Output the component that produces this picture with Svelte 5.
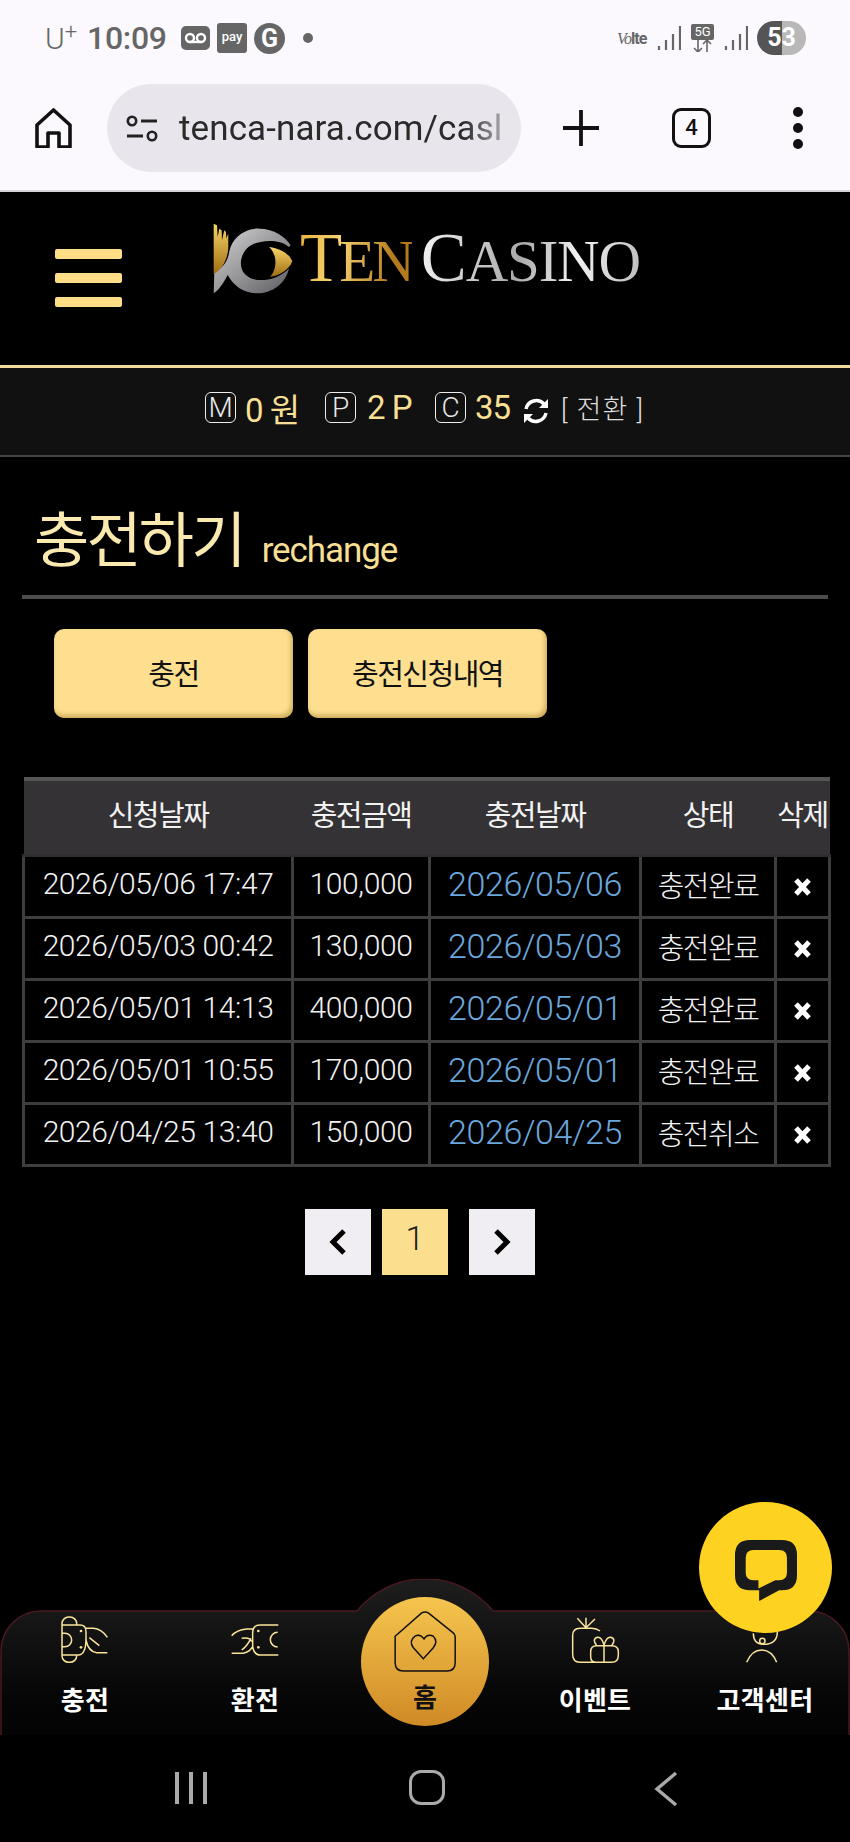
<script>
    const rows = [
        { req: "2026/05/06 17:47", amount: "100,000", date: "2026/05/06", status: "충전완료" },
        { req: "2026/05/03 00:42", amount: "130,000", date: "2026/05/03", status: "충전완료" },
        { req: "2026/05/01 14:13", amount: "400,000", date: "2026/05/01", status: "충전완료" },
        { req: "2026/05/01 10:55", amount: "170,000", date: "2026/05/01", status: "충전완료" },
        { req: "2026/04/25 13:40", amount: "150,000", date: "2026/04/25", status: "충전취소" }
    ];
</script>

<div class="page">
    <!-- android status bar -->
    <div class="status">
        <div class="status-left">
            <span class="carrier">U<sup>+</sup></span>
            <span class="clock">10:09</span>
            <svg class="vm" viewBox="0 0 29 24">
                <rect width="29" height="24" rx="5" fill="#666" />
                <circle cx="9" cy="12" r="4" fill="none" stroke="#fff" stroke-width="2.4" />
                <circle cx="20" cy="12" r="4" fill="none" stroke="#fff" stroke-width="2.4" />
                <path d="M9 16h11" stroke="#fff" stroke-width="2.4" />
            </svg>
            <span class="pay">pay</span>
            <span class="g">G</span>
            <span class="dot"></span>
        </div>
        <div class="status-right">
            <span class="volte"><i>Vo</i><b>lte</b></span>
            <svg class="sig" viewBox="0 0 24 24">
                <path d="M2 24v-4M9 24v-10M16 24v-16M23 24v-24" stroke="#666" stroke-width="2.2" />
            </svg>
            <span class="fiveg"><span>5G</span>
                <svg viewBox="0 0 23 12" width="23" height="12">
                    <path d="M7 0v12M3 8l4 4 4-4M16 12V0M12 4l4-4 4 4" fill="none" stroke="#666" stroke-width="1.6" />
                </svg>
            </span>
            <svg class="sig" viewBox="0 0 24 24">
                <path d="M2 24v-4M9 24v-10M16 24v-16M23 24v-24" stroke="#666" stroke-width="2.2" />
            </svg>
            <span class="battery">53</span>
        </div>
    </div>

    <!-- chrome toolbar -->
    <div class="toolbar">
        <svg class="tb-home" viewBox="0 0 37 40">
            <path d="M2 39V17L18.5 2 35 17v22H24V25H13v14Z" fill="none" stroke="#111" stroke-width="3.6" stroke-linejoin="round" />
        </svg>
        <div class="urlbar">
            <svg class="tune" viewBox="0 0 32 27">
                <circle cx="6" cy="6" r="4.2" fill="none" stroke="#222" stroke-width="2.6" />
                <path d="M15 6h16M1 21h16" stroke="#222" stroke-width="2.8" />
                <circle cx="26" cy="21" r="4.2" fill="none" stroke="#222" stroke-width="2.6" />
            </svg>
            <span class="url">tenca-nara.com/casl</span>
        </div>
        <svg class="tb-plus" viewBox="0 0 36 36">
            <path d="M18 0v36M0 18h36" stroke="#111" stroke-width="3.8" />
        </svg>
        <span class="tabs">4</span>
        <span class="kebab"><i></i><i></i><i></i></span>
    </div>

    <header class="head">
        <div class="burger"><i></i><i></i><i></i></div>
        <div class="logo">
            <svg class="mark" viewBox="60 30 250 220">
                <defs>
                    <linearGradient id="lg" x1="0" y1="0" x2="0" y2="1">
                        <stop offset="0" stop-color="#f8d568" />
                        <stop offset="1" stop-color="#a06c12" />
                    </linearGradient>
                    <linearGradient id="ls" x1="0" y1="0" x2="1" y2="1">
                        <stop offset="0" stop-color="#d6d6d8" />
                        <stop offset="1" stop-color="#5c5c60" />
                    </linearGradient>
                </defs>
                <path fill="url(#ls)" d="M115 120C125 70 170 48 205 50C250 50 285 75 300 100L295 105C270 85 235 85 210 90C170 95 150 125 150 155C150 185 175 205 210 205C240 205 270 195 295 170C285 215 245 245 200 245C160 245 130 225 110 190C100 210 85 235 68 245L70 180C95 170 110 150 115 120Z" />
                <path fill="url(#lg)" d="M235 105C270 110 295 125 305 148C295 175 265 192 238 195C258 175 262 130 235 105Z" />
                <path fill="url(#lg)" d="M68 35L78 40L80 75L85 50L92 55L93 85L100 55L105 60L106 80L112 65L112 110C108 150 90 175 68 187Z" />
            </svg>
            <span class="word gold"><span class="big">T</span>EN</span>
            <span class="word silver"><span class="big">C</span>ASINO</span>
        </div>
    </header>

    <div class="wallet">
        <span class="box">M</span><span class="val m">0 원</span>
        <span class="box">P</span><span class="val p">2 P</span>
        <span class="box">C</span><span class="val">35</span>
        <svg class="refresh" viewBox="0 0 28 28">
            <path d="M4 12A10.5 10.5 0 0 1 22 7" fill="none" stroke="#fff" stroke-width="3.4" />
            <path d="M26 2v9h-9Z" fill="#fff" />
            <path d="M24 16A10.5 10.5 0 0 1 6 21" fill="none" stroke="#fff" stroke-width="3.4" />
            <path d="M2 26v-9h9Z" fill="#fff" />
        </svg>
        <span class="swap">[ 전환 ]</span>
    </div>

    <main>
        <h1 class="title">충전하기 <small>rechange</small></h1>
        <div class="btns">
            <button>충전</button>
            <button>충전신청내역</button>
        </div>

        <table>
            <colgroup>
                <col style="width:269px" />
                <col style="width:137px" />
                <col style="width:211px" />
                <col style="width:135px" />
                <col style="width:54px" />
            </colgroup>
            <thead>
                <tr>
                    <th>신청날짜</th>
                    <th>충전금액</th>
                    <th>충전날짜</th>
                    <th>상태</th>
                    <th>삭제</th>
                </tr>
            </thead>
            <tbody>
                {#each rows as row}
                    <tr>
                        <td>{row.req}</td>
                        <td>{row.amount}</td>
                        <td class="blue">{row.date}</td>
                        <td class="kr">{row.status}</td>
                        <td>
                            <svg class="del" viewBox="0 0 19 20">
                                <path d="M3 3l13 14M16 3L3 17" stroke="#fff" stroke-width="5" />
                            </svg>
                        </td>
                    </tr>
                {/each}
            </tbody>
        </table>

        <div class="pager">
            <span class="pg">
                <svg viewBox="0 0 18 26"><path d="M15 2L4 13l11 11" fill="none" stroke="#000" stroke-width="5" /></svg>
            </span>
            <span class="pg on">1</span>
            <span class="pg next">
                <svg viewBox="0 0 18 26"><path d="M3 2l11 11L3 24" fill="none" stroke="#000" stroke-width="5" /></svg>
            </span>
        </div>
    </main>

    <nav class="tabbar">
        <svg class="tabshape" viewBox="0 0 850 156">
            <defs>
                <linearGradient id="tb" x1="0" y1="0" x2="0" y2="1">
                    <stop offset="0" stop-color="#1e1e1e" />
                    <stop offset="0.75" stop-color="#060606" />
                    <stop offset="1" stop-color="#030303" />
                </linearGradient>
            </defs>
            <path d="M1 156V72a40 40 0 0 1 40-40H357A88 88 0 0 1 493 32H809a40 40 0 0 1 40 40V156" fill="url(#tb)" stroke="#4a1a20" stroke-width="1.5" />
        </svg>

        <div class="tab">
            <svg class="ic" viewBox="30 30 150 150">
                <path d="M80 60V55A20 20 0 0 0 60 36H56A20 20 0 0 0 36 55V152A20 20 0 0 0 56 172H60A20 20 0 0 0 80 152V150M36 60H90Q108 60 108 80V100Q108 150 85 150H36M36 85H45A20 20 0 0 1 45 125H36M108 70H130Q155 72 172 97M172 143H140Q115 140 108 105M118 98L148 122" />
                <circle cx="93" cy="78" r="4" class="dotf" />
                <circle cx="93" cy="127" r="4" class="dotf" />
            </svg>
            <span>충전</span>
        </div>
        <div class="tab">
            <svg class="ic" viewBox="540 30 150 150">
                <path d="M685 60H630Q610 60 608 80V125Q612 150 630 150H685M683 82A22 22 0 1 0 683 126M545 92Q560 75 590 72H612M545 145H580Q600 140 608 125M575 100Q600 95 605 110M603 100Q590 125 575 135" />
                <circle cx="625" cy="78" r="4" class="dotf" />
                <circle cx="625" cy="127" r="4" class="dotf" />
            </svg>
            <span>환전</span>
        </div>
        <div class="tab">
            <div class="homebtn">
                <svg class="house" viewBox="60 15 210 205">
                    <path d="M75 100L155 30Q165 24 175 30L250 90Q256 95 256 102V180Q256 205 231 205H100Q75 205 75 180Z" />
                    <path d="M160 168L130 135Q115 115 135 100Q150 92 162 108Q172 92 190 100Q205 115 190 135Z" />
                </svg>
                <span>홈</span>
            </div>
        </div>
        <div class="tab">
            <svg class="ic" viewBox="30 30 150 150">
                <path d="M120 78Q110 70 95 70H60Q38 70 38 92V148Q38 172 60 172H155Q175 172 175 150V140Q175 122 155 122H110Q92 122 92 140V155Q92 172 110 172M132 122V172M132 120Q125 95 112 97Q95 102 110 122M132 120Q140 95 152 97Q170 102 155 122M78 68L52 40M78 68V38M78 68L105 42" />
            </svg>
            <span>이벤트</span>
        </div>
        <div class="tab">
            <svg class="ic" viewBox="550 30 150 150">
                <path d="M590 85Q590 118 620 118Q662 118 662 80M570 172Q585 135 615 135Q645 135 660 172" />
                <circle cx="617" cy="108" r="8" fill="none" stroke="#fbe39a" stroke-width="4.5" />
            </svg>
            <span>고객센터</span>
        </div>
    </nav>

    <div class="sysnav">
        <span class="recent"><i></i><i></i><i></i></span>
        <span class="homekey"></span>
        <svg class="back" viewBox="0 0 24 36">
            <path d="M22 2L3 18l19 16" fill="none" stroke="#aaa" stroke-width="3.4" />
        </svg>
    </div>

    <div class="chat">
        <svg viewBox="930 180 185 182">
            <path fill="#1a1a1a" fill-rule="evenodd" d="M975 180H1070Q1115 180 1115 225V285Q1115 330 1070 330H1062L1002 362V330H975Q930 330 930 285V225Q930 180 975 180ZM985 210Q962 210 962 233V278Q962 300 985 300H1000V325L1050 300H1062Q1085 300 1085 278V233Q1085 210 1062 210Z" />
        </svg>
    </div>
</div>

<style>
    :global(body) {
        background: #000;
    }

    .page {
        position: relative;
        display: flex;
        flex-direction: column;
        width: 850px;
        height: 1842px;
        overflow: hidden;
        background: #000;
        font-family: Roboto, "Noto Sans CJK KR", sans-serif;
    }

    /* status bar */
    .status {
        display: flex;
        justify-content: space-between;
        align-items: center;
        height: 76px;
        padding: 0 44px 0 45px;
        box-sizing: border-box;
        background: #fbf9fe;
        color: #666;
    }

    .status-left,
    .status-right {
        display: flex;
        align-items: center;
    }

    .carrier {
        font-size: 30px;
        font-weight: 300;
        width: 42px;
    }

    .carrier sup {
        font-size: 22px;
        line-height: 0;
        vertical-align: 10px;
    }

    .clock {
        width: 94px;
        font-size: 32px;
        font-weight: 500;
        letter-spacing: -0.3px;
    }

    .vm {
        width: 29px;
        height: 24px;
    }

    .pay {
        width: 30px;
        height: 30px;
        margin-left: 7px;
        border-radius: 3px;
        background: #666;
        color: #fff;
        font-size: 13px;
        font-weight: 500;
        line-height: 28px;
        text-align: center;
    }

    .g {
        width: 31px;
        height: 31px;
        margin-left: 7px;
        border-radius: 50%;
        background: #666;
        color: #fff;
        font-size: 25px;
        font-weight: 700;
        line-height: 31px;
        text-align: center;
    }

    .dot {
        width: 10px;
        height: 10px;
        margin-left: 18px;
        border-radius: 50%;
        background: #666;
    }

    .volte {
        width: 40px;
        font-size: 16px;
        letter-spacing: -1px;
    }

    .volte i {
        font-family: "Liberation Serif", serif;
    }

    .sig {
        width: 24px;
        height: 24px;
    }

    .fiveg {
        display: flex;
        flex-direction: column;
        margin: 0 10px;
        width: 23px;
    }

    .fiveg span {
        height: 16px;
        background: #666;
        border-radius: 2px;
        color: #fff;
        font-size: 13px;
        line-height: 16px;
        text-align: center;
    }

    .battery {
        width: 49px;
        height: 34px;
        margin-left: 9px;
        border-radius: 17px;
        background: linear-gradient(90deg, #555 0 25px, #b8b8b8 25px);
        color: #fff;
        font-size: 25px;
        font-weight: 700;
        line-height: 34px;
        text-align: center;
    }

    /* browser toolbar */
    .toolbar {
        display: flex;
        align-items: center;
        height: 116px;
        box-sizing: border-box;
        padding: 0 0 10px 35px;
        background: #fbf9fe;
        border-bottom: 2px solid #d4d4d6;
    }

    .tb-home {
        width: 37px;
        height: 40px;
    }

    .urlbar {
        display: flex;
        align-items: center;
        width: 414px;
        height: 88px;
        margin-left: 35px;
        padding: 0 17px 0 19px;
        box-sizing: border-box;
        border-radius: 44px;
        background: #e8e6ec;
    }

    .tune {
        flex: none;
        width: 32px;
        height: 27px;
    }

    .url {
        margin-left: 21px;
        color: #2a2a2a;
        font-size: 35px;
        letter-spacing: 0.1px;
        white-space: nowrap;
        mask-image: linear-gradient(90deg, #000 88%, rgba(0, 0, 0, 0.35));
    }

    .tb-plus {
        width: 36px;
        height: 36px;
        margin-left: 42px;
    }

    .tabs {
        width: 33px;
        height: 34px;
        margin-left: 73px;
        border: 3.5px solid #111;
        border-radius: 9px;
        color: #111;
        font-size: 22px;
        font-weight: 500;
        line-height: 34px;
        text-align: center;
    }

    .kebab {
        display: flex;
        flex-direction: column;
        gap: 6px;
        margin-left: 82px;
    }

    .kebab i {
        width: 10px;
        height: 10px;
        border-radius: 50%;
        background: #111;
    }

    /* site header */
    .head {
        display: flex;
        height: 173px;
        box-sizing: border-box;
        padding-left: 55px;
    }

    .burger {
        display: flex;
        flex-direction: column;
        gap: 14px;
        width: 67px;
        padding-top: 57px;
    }

    .burger i {
        height: 10px;
        border-radius: 2px;
        background: #fddd85;
    }

    .logo {
        display: flex;
        align-items: baseline;
        height: 91px;
        margin-left: 89px;
        padding-top: 33px;
        white-space: nowrap;
        font-family: "Liberation Serif", serif;
        font-size: 59px;
        line-height: 66px;
    }

    .mark {
        align-self: flex-start;
        width: 83px;
        height: 73px;
        margin: -3px 6px 0 0;
    }

    .word {
        -webkit-background-clip: text;
        background-clip: text;
        color: transparent;
    }

    .word .big {
        font-size: 69px;
    }

    .gold {
        margin-right: 9px;
        background-image: linear-gradient(100deg, #e8b33e, #f5d272 35%, #b47a1c 80%);
        letter-spacing: -3px;
    }

    .silver {
        background-image: linear-gradient(100deg, #f4f4f6, #aaa 45%, #f2f2f4 70%, #bbb);
        letter-spacing: -1.2px;
    }

    /* wallet strip */
    .wallet {
        display: flex;
        align-items: center;
        height: 79px;
        padding: 0 0 8px 205px;
        border-top: 3px solid #f2dc9c;
        border-bottom: 2px solid #444;
        background: #111;
    }

    .box {
        width: 29px;
        height: 29px;
        border: 1.4px solid #eee;
        border-radius: 6px;
        color: #e8e8e8;
        font-size: 28px;
        font-weight: 300;
        line-height: 29px;
        text-align: center;
    }

    .val {
        margin-left: 9px;
        color: #f7df93;
        font-size: 33px;
        letter-spacing: -1px;
    }

    .val.m {
        width: 54px;
        margin-right: 26px;
        white-space: nowrap;
    }

    .val.p {
        width: 46px;
        margin: 0 22px 0 11px;
        white-space: nowrap;
    }

    .refresh {
        width: 28px;
        height: 28px;
        margin: 6px 11px 0 12px;
    }

    .swap {
        color: #ddd;
        font-size: 27px;
        font-weight: 300;
        letter-spacing: 1.2px;
    }

    /* main */
    main {
        flex: 1;
        padding: 0 22px;
    }

    .title {
        height: 142px;
        margin: 0;
        box-sizing: border-box;
        padding: 47px 0 0 12px;
        border-bottom: 4px solid #4e4c4e;
        color: #fbeab0;
        font-size: 60px;
        font-weight: 400;
        letter-spacing: -2.8px;
        line-height: 76px;
    }

    .title small {
        margin-left: 6px;
        color: #f7df93;
        font-size: 35px;
        letter-spacing: -1.1px;
    }

    .btns {
        display: flex;
        gap: 15px;
        padding: 30px 0 0 32px;
    }

    button {
        width: 239px;
        height: 89px;
        border: 0;
        border-radius: 10px;
        background: #fddf8f;
        box-shadow: inset -2px -3px 4px rgba(150, 110, 30, 0.45);
        color: #111;
        font-family: inherit;
        font-size: 29px;
        letter-spacing: -1.5px;
        padding-bottom: 4px;
    }

    table {
        width: 806px;
        margin-top: 59px;
        border-collapse: collapse;
        table-layout: fixed;
        color: #f2f2f2;
    }

    th {
        height: 63px;
        padding: 0 0 10px;
        border-top: 4px solid #555;
        border-bottom: 3px solid #2e2e2e;
        background: #353235;
        font-size: 29px;
        font-weight: 400;
        letter-spacing: -1.5px;
        white-space: nowrap;
    }

    td {
        height: 53px;
        padding: 0 0 6px;
        border: 3px solid #3e3e3e;
        font-size: 30px;
        font-weight: 300;
        letter-spacing: -0.4px;
        text-align: center;
        white-space: nowrap;
    }

    .blue {
        color: #6aa7dc;
        font-size: 34px;
    }

    .kr {
        font-size: 29px;
        letter-spacing: -1.5px;
    }

    .del {
        display: block;
        width: 19px;
        height: 20px;
        margin: 6px auto 0;
    }

    .pager {
        display: flex;
        padding: 42px 0 0 283px;
    }

    .pg {
        display: flex;
        align-items: center;
        justify-content: center;
        width: 66px;
        height: 66px;
        margin-right: 11px;
        background: #f0eef2;
    }

    .pg svg {
        width: 18px;
        height: 26px;
    }

    .pg.on {
        margin-right: 21px;
        padding-bottom: 8px;
        height: 58px;
        background: #fbdf8e;
        color: #222;
        font-size: 34px;
        font-weight: 300;
    }

    /* bottom tabs */
    .tabbar {
        position: relative;
        display: flex;
        height: 156px;
    }

    .tabshape {
        position: absolute;
        inset: 0;
        width: 850px;
        height: 156px;
    }

    .tab {
        position: relative;
        display: flex;
        flex-direction: column;
        align-items: center;
        width: 170px;
        padding-top: 36px;
        color: #fff;
        font-size: 26px;
        font-weight: 700;
        letter-spacing: 0.3px;
    }

    .tab > span {
        margin-top: 18px;
        line-height: 36px;
    }

    .ic {
        width: 50px;
        height: 50px;
        fill: none;
        stroke: #fbe39a;
        stroke-width: 4.5;
    }

    .dotf {
        fill: #fbe39a;
        stroke: none;
    }

    .homebtn {
        display: flex;
        flex-direction: column;
        align-items: center;
        width: 128px;
        height: 129px;
        margin-top: -18px;
        border-radius: 50%;
        background: linear-gradient(#f6c54e, #cf8a26);
        color: #111;
    }

    .house {
        width: 70px;
        height: 68px;
        margin-top: 11px;
        fill: none;
        stroke: #111;
        stroke-width: 4.5;
    }

    .homebtn span {
        margin-top: 6px;
        line-height: 32px;
    }

    /* system nav */
    .sysnav {
        position: relative;
        height: 107px;
        background: #000;
    }

    .recent {
        position: absolute;
        left: 175px;
        top: 37px;
        display: flex;
        gap: 10px;
    }

    .recent i {
        width: 4px;
        height: 32px;
        background: #aaa;
    }

    .homekey {
        position: absolute;
        left: 409px;
        top: 35px;
        width: 30px;
        height: 29px;
        border: 3.5px solid #aaa;
        border-radius: 12px;
    }

    .back {
        position: absolute;
        left: 654px;
        top: 36px;
        width: 24px;
        height: 36px;
    }

    /* floating chat button */
    .chat {
        position: absolute;
        left: 699px;
        top: 1502px;
        display: flex;
        align-items: center;
        justify-content: center;
        width: 133px;
        height: 131px;
        border-radius: 50%;
        background: #fed220;
    }

    .chat svg {
        width: 62px;
        height: 61px;
        margin-top: 5px;
    }
</style>
